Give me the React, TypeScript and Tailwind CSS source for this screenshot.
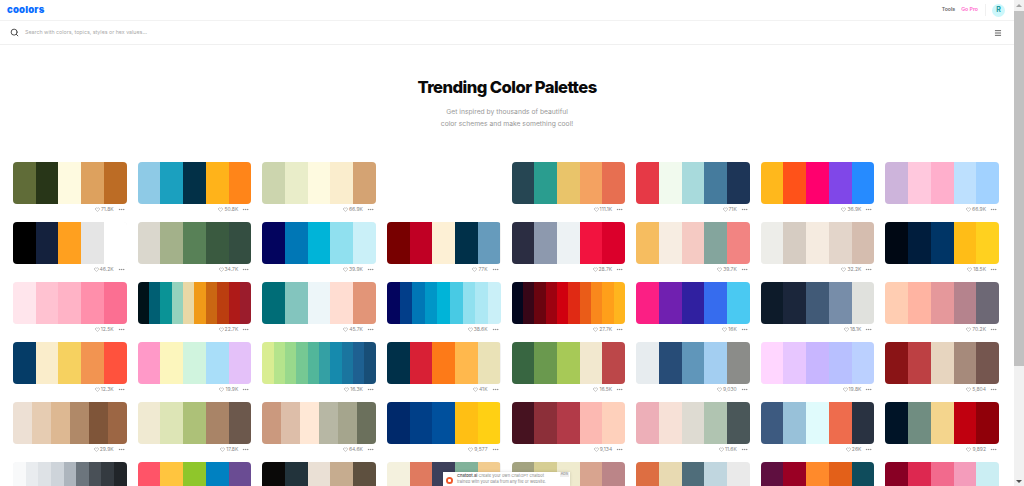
import {Ellipsis, Heart, Menu, Search} from "lucide-react";

type Palette = {colors: string[]; saves?: string} | null;

const palettes: Palette[] = [
  {colors: ["#606c38", "#283618", "#fefae0", "#dda15e", "#bc6c25"], saves: "71.8K"},
  {colors: ["#8ecae6", "#1ba0bf", "#023047", "#ffb31a", "#ff8519"], saves: "50.8K"},
  {colors: ["#ccd5ae", "#e9edc9", "#fefae0", "#faedcd", "#d4a373"], saves: "66.9K"},
  null, // ad slot
  {colors: ["#264653", "#2a9d8f", "#e9c46a", "#f4a261", "#e76f51"], saves: "111.1K"},
  {colors: ["#e63946", "#f1faee", "#a8dadc", "#457b9d", "#1d3557"], saves: "71K"},
  {colors: ["#ffb81c", "#ff5219", "#ff006e", "#8047e8", "#268bff"], saves: "36.9K"},
  {colors: ["#cdb4db", "#ffc8dd", "#ffafcc", "#bde0fe", "#a2d2ff"], saves: "66.9K"},

  {colors: ["#000000", "#14213d", "#ffa01f", "#e5e5e5", "#ffffff"], saves: "46.2K"},
  {colors: ["#dad7cd", "#a3b18a", "#588157", "#3a5a40", "#344e41"], saves: "34.7K"},
  {colors: ["#03045e", "#0077b6", "#00b4d8", "#90e0ef", "#caf0f8"], saves: "39.9K"},
  {colors: ["#780000", "#c00024", "#fdf0d5", "#003049", "#669bbc"], saves: "77K"},
  {colors: ["#2b2d42", "#8d99ae", "#edf2f4", "#f2133f", "#db002b"], saves: "28.7K"},
  {colors: ["#f6bd60", "#f7ede2", "#f5cac3", "#84a59d", "#f28482"], saves: "39.7K"},
  {colors: ["#edede9", "#d6ccc2", "#f5ebe0", "#e3d5ca", "#d5bdaf"], saves: "32.2K"},
  {colors: ["#000814", "#001d3d", "#003566", "#ffbd17", "#ffd11f"], saves: "18.5K"},

  {colors: ["#ffe5ec", "#ffc2d1", "#ffb3c6", "#ff8fab", "#fb6f92"], saves: "12.5K"},
  {colors: ["#001219", "#005f73", "#0a9396", "#94d2bd", "#e9d8a6", "#f09a18", "#ca6712", "#bb3e0f", "#ae1a18", "#9b1c2c"], saves: "22.7K"},
  {colors: ["#006d77", "#83c5be", "#edf6f9", "#ffddd2", "#e29578"], saves: "45.7K"},
  {colors: ["#03045e", "#023e8a", "#0077b6", "#0096c7", "#00b4d8", "#48cae4", "#90e0ef", "#ade8f4", "#caf0f8"], saves: "38.6K"},
  {colors: ["#03071e", "#370617", "#6a040f", "#9d0210", "#d0000f", "#e02a14", "#ea5c18", "#f9881c", "#ff9f1a", "#ffb51e"], saves: "27.7K"},
  {colors: ["#fb1f84", "#7020b0", "#3020a0", "#366cee", "#4ac9f2"], saves: "16K"},
  {colors: ["#0d1b2a", "#1b263b", "#415a77", "#778da9", "#e0e1dd"], saves: "18.1K"},
  {colors: ["#ffcdb2", "#ffb4a2", "#e5989b", "#b5838d", "#6d6875"], saves: "70.2K"},

  {colors: ["#053c67", "#faedcb", "#f6d160", "#f29451", "#ff523d"], saves: "12.3K"},
  {colors: ["#ff99c8", "#fcf6bd", "#d0f4de", "#a9def9", "#e4c1f9"], saves: "19.9K"},
  {colors: ["#d9ed92", "#b5e48c", "#99d98c", "#76c893", "#52b69a", "#34a0a4", "#168aad", "#1a759f", "#1e6091", "#184e77"], saves: "16.3K"},
  {colors: ["#003049", "#d82035", "#fd7a18", "#ffb84d", "#eae2b7"], saves: "41K"},
  {colors: ["#386641", "#6a994e", "#a7c957", "#f2e8cf", "#bc4749"], saves: "16.5K"},
  {colors: ["#e7ecef", "#274c77", "#6096ba", "#a3cef1", "#8b8c89"], saves: "9,030"},
  {colors: ["#ffd6ff", "#e7c6ff", "#c8b6ff", "#b8c0ff", "#bbd0ff"], saves: "19.8K"},
  {colors: ["#8a1416", "#bd4043", "#e7d5bf", "#a68a7b", "#75564f"], saves: "5,804"},

  {colors: ["#ede0d4", "#e6ccb2", "#ddb892", "#b08968", "#7f5539", "#9c6644"], saves: "29.9K"},
  {colors: ["#f0ead2", "#dde5b6", "#adc178", "#a98467", "#6c584c"], saves: "17.8K"},
  {colors: ["#cb997e", "#ddbea9", "#ffe8d6", "#b7b7a4", "#a5a58d", "#6b705c"], saves: "64.6K"},
  {colors: ["#00296b", "#003f88", "#00509d", "#ffbf14", "#ffd014"], saves: "9,577"},
  {colors: ["#461220", "#8c2f39", "#b23a48", "#fcb9b2", "#fed0bb"], saves: "9,134"},
  {colors: ["#edafb8", "#f7e1d7", "#dedbd2", "#b0c4b1", "#4a5759"], saves: "11.6K"},
  {colors: ["#3d5a80", "#98c1d9", "#e0fbfc", "#ee6c4d", "#293241"], saves: "26K"},
  {colors: ["#001427", "#708d81", "#f4d58d", "#c0000f", "#900009"], saves: "9,892"},

  // last row runs past the bottom of the window, its counts are never seen
  {colors: ["#f8f9fa", "#e9ecef", "#dee2e6", "#ced4da", "#adb5bd", "#6c757d", "#495057", "#343a40", "#212529"]},
  {colors: ["#ff5468", "#ffc53f", "#8fc62b", "#0081c1", "#6a4c93"]},
  {colors: ["#0a0908", "#22333b", "#eae0d5", "#c6ac8f", "#5e503f"]},
  {colors: ["#f4f1de", "#e07a5f", "#3d405b", "#81b29a", "#f2cc8f"]},
  {colors: ["#a3a380", "#d6ce93", "#efebce", "#d8a48f", "#bb8588"]},
  {colors: ["#dd6e42", "#e8dab2", "#4f6d7a", "#c0d6df", "#eaeaea"]},
  {colors: ["#5f0f40", "#9a0024", "#ff8a2b", "#e36019", "#0f4c5c"]},
  {colors: ["#880024", "#dd2850", "#f26a8d", "#f49cbb", "#cbeef3"]},
];

const PaletteCard = ({palette}: {palette: Palette}) => {
  if (!palette) return <div className="h-[60px]" />;
  return (
    <div className="h-[60px]">
      <div className="flex h-[42px] overflow-hidden rounded-[4px] ring-1 ring-inset ring-black/5">
        {palette.colors.map((color, i) => (
          <div key={i} className="flex-1" style={{backgroundColor: color}} />
        ))}
      </div>
      {palette.saves && (
        <div className="mt-[2px] flex h-[7px] items-center justify-end gap-[4px] pr-[2px] text-[5px] text-[#888]">
          <div className="flex items-center gap-[1px]">
            <Heart size={5} strokeWidth={2} className="-mt-[1px]" />
            <span>{palette.saves}</span>
          </div>
          <Ellipsis size={7} strokeWidth={2} className="text-[#777]" />
        </div>
      )}
    </div>
  );
};

export default function App() {
  return (
    <div className="relative flex h-[486px] w-[1024px] overflow-hidden bg-white font-['Inter',sans-serif]">
      <div className="min-w-0 flex-1">
        <div className="flex h-[21px] items-center justify-between border-b border-[#f2f2f2] pl-[7px] pr-[9px]">
          <span className="text-[9.5px] font-black leading-none tracking-[0.2px] text-[#0a6cff]">coolors</span>
          <div className="flex items-center text-[5.2px] font-semibold">
            <span className="text-[#666]">Tools</span>
            <span className="ml-[6px] text-[#ff66cc]">Go Pro</span>
            <div className="ml-[7px] h-[12px] w-px bg-[#f0f0f0]" />
            <div className="ml-[6px] flex h-[13px] w-[13px] items-center justify-center rounded-full bg-[#ccf7fb] text-[7px] font-bold text-[#1a9aa0]">
              R
            </div>
          </div>
        </div>
        <div className="flex h-[24px] items-center justify-between border-b border-[#f0f0f0] pl-[10px] pr-[12px]">
          <div className="flex items-center gap-[6px]">
            <Search size={9} strokeWidth={2.5} className="text-[#444]" />
            <span className="text-[5.3px] text-[#aaa]">Search with colors, topics, styles or hex values...</span>
          </div>
          <Menu size={8} strokeWidth={2.5} className="text-[#444]" />
        </div>

        <div className="flex flex-col items-center pt-[31px]">
          <h1 className="text-[16.6px] font-extrabold leading-[22px] tracking-[-0.55px] text-[#0a0a0a]">Trending Color Palettes</h1>
          <p className="mt-[8px] text-center text-[6.75px] leading-[11.5px] text-[#999]">
            Get inspired by thousands of beautiful
            <br />
            color schemes and make something cool!
          </p>
        </div>

        <div className="mt-[33px] grid grid-cols-8 gap-x-[11px] pl-[13px] pr-[15px]">
          {palettes.map((palette, i) => (
            <PaletteCard key={i} palette={palette} />
          ))}
        </div>
      </div>

      <div className="flex w-[10px] shrink-0 flex-col bg-[#f1f1f1]">
        <div className="flex h-[11px] items-center justify-center">
          <div className="h-0 w-0 border-x-[3px] border-b-[3px] border-x-transparent border-b-[#a3a3a3]" />
        </div>
        <div className="h-[355px] bg-[#c1c1c1]" />
        <div className="flex-1" />
        <div className="flex h-[10px] items-center justify-center">
          <div className="h-0 w-0 border-x-[3px] border-t-[3px] border-x-transparent border-t-[#505050]" />
        </div>
      </div>

      {/* chatbot ad over the last row */}
      <div className="absolute bottom-0 left-[443px] flex h-[14px] w-[127px] gap-[3px] bg-white pl-[3px] pt-[1px] shadow-[0_0_3px_rgba(0,0,0,0.15)]">
        <div className="mt-[4px] flex h-[7px] w-[7px] shrink-0 items-center justify-center rounded-full bg-[#f0592a]">
          <div className="h-[3px] w-[3px] rounded-[1px] bg-white" />
        </div>
        <p className="ml-[1px] whitespace-nowrap text-[4.05px] leading-[6px] text-[#888]">
          <span className="font-semibold text-[#555]">Chatbot.ai</span> Create your own ChatGPT chatbot
          <br />
          trained with your data from any file or website.
        </p>
        <span className="absolute right-[1px] top-0 bg-[#eee] px-[1px] text-[3.5px] leading-[5px] text-[#777]">ADS</span>
      </div>
    </div>
  );
}
